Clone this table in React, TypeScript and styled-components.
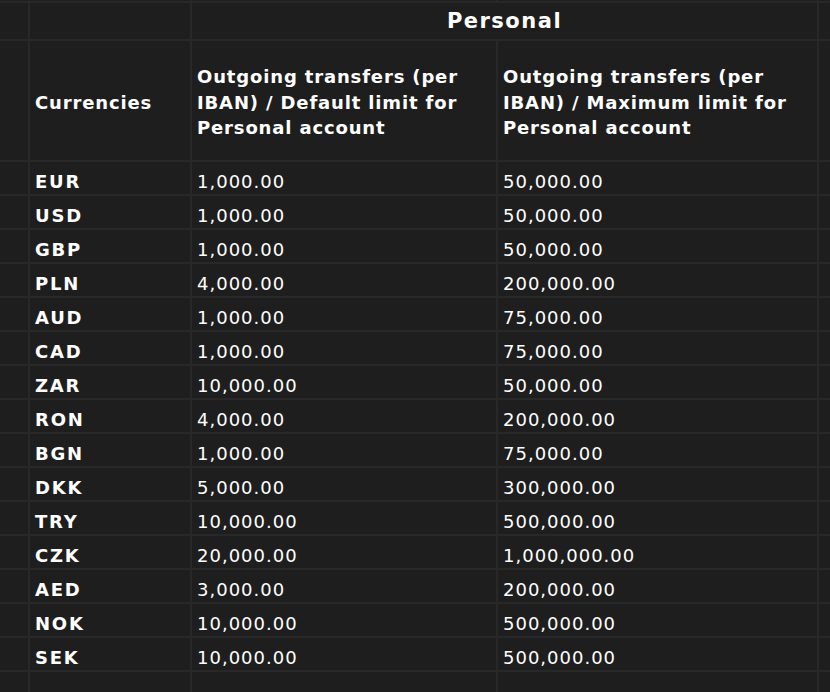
import React from "react";
import styled, { createGlobalStyle } from "styled-components";

const Global = createGlobalStyle`
  html, body { margin: 0; padding: 0; background: #1e1e1e; }
  body { font-family: "DejaVu Sans", "Liberation Sans", sans-serif; color: #ffffff; }
`;

const Sheet = styled.div`
  display: grid;
  grid-template-columns: 28px 160px 304px 319px 1fr;
  grid-template-rows: 1px 36px 119px repeat(15, 32px) 1fr;
  gap: 2px;
  background: #282828;
  min-height: 692px;
  width: 830px;
  overflow: hidden;
`;

const Cell = styled.div<{ $span?: number; $center?: boolean; $drop?: number }>`
  background: #1e1e1e;
  grid-column: span ${(p) => p.$span ?? 1};
  display: flex;
  align-items: center;
  justify-content: ${(p) => (p.$center ? "center" : "flex-start")};
  padding: ${(p) => p.$drop ?? 0}px 5px 0;
  min-width: 0;
  white-space: nowrap;
`;

const GroupTitle = styled.span`
  font-size: 21px;
  font-weight: 700;
  letter-spacing: 1.5px;
`;

const HeadText = styled.span`
  font-size: 18px;
  font-weight: 700;
  line-height: 25.5px;
  letter-spacing: 0.85px;
`;

const Code = styled.span`
  font-size: 18px;
  font-weight: 700;
  letter-spacing: 1.8px;
`;

const Value = styled.span`
  font-size: 18px;
  font-weight: 400;
  letter-spacing: 1px;
`;

const rows: [string, string, string][] = [
  ["EUR", "1,000.00", "50,000.00"],
  ["USD", "1,000.00", "50,000.00"],
  ["GBP", "1,000.00", "50,000.00"],
  ["PLN", "4,000.00", "200,000.00"],
  ["AUD", "1,000.00", "75,000.00"],
  ["CAD", "1,000.00", "75,000.00"],
  ["ZAR", "10,000.00", "50,000.00"],
  ["RON", "4,000.00", "200,000.00"],
  ["BGN", "1,000.00", "75,000.00"],
  ["DKK", "5,000.00", "300,000.00"],
  ["TRY", "10,000.00", "500,000.00"],
  ["CZK", "20,000.00", "1,000,000.00"],
  ["AED", "3,000.00", "200,000.00"],
  ["NOK", "10,000.00", "500,000.00"],
  ["SEK", "10,000.00", "500,000.00"],
];

const Empty = () => <Cell />;

export default function App() {
  return (
    <>
      <Global />
      <Sheet>
        <Empty /><Empty /><Empty /><Empty /><Empty />

        <Empty /><Empty />
        <Cell $span={2} $center>
          <GroupTitle>Personal</GroupTitle>
        </Cell>
        <Empty />

        <Empty />
        <Cell $drop={4}><HeadText>Currencies</HeadText></Cell>
        <Cell $drop={4}>
          <HeadText>
            Outgoing transfers (per
            <br />
            IBAN) / Default limit for
            <br />
            Personal account
          </HeadText>
        </Cell>
        <Cell $drop={4}>
          <HeadText>
            Outgoing transfers (per
            <br />
            IBAN) / Maximum limit for
            <br />
            Personal account
          </HeadText>
        </Cell>
        <Empty />

        {rows.map(([c, a, b]) => (
          <React.Fragment key={c}>
            <Empty />
            <Cell $drop={7}><Code>{c}</Code></Cell>
            <Cell $drop={7}><Value>{a}</Value></Cell>
            <Cell $drop={7}><Value>{b}</Value></Cell>
            <Empty />
          </React.Fragment>
        ))}

        <Empty /><Empty /><Empty /><Empty /><Empty />
      </Sheet>
    </>
  );
}
